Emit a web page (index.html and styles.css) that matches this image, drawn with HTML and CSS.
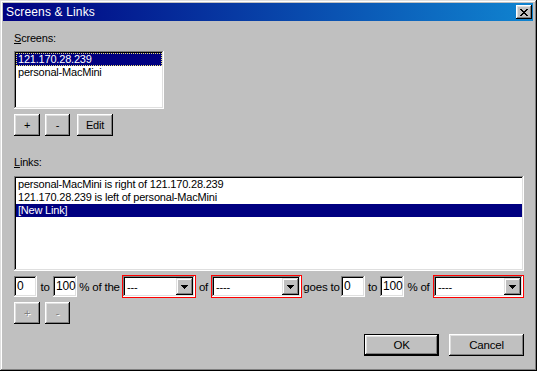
FILE: index.html
```html
<!DOCTYPE html>
<html lang="en">
<head>
    <meta charset="UTF-8">
    <title>Screens &amp; Links</title>
    <link rel="stylesheet" href="styles.css">
</head>
<body>
<div class="window">
    <div class="titlebar">
        <span class="title">Screens &amp; Links</span>
        <span class="close">
            <svg width="8" height="7" viewBox="0 0 8 7" shape-rendering="crispEdges">
                <path d="M0 0h2v1h-2z M6 0h2v1h-2z M1 1h2v1h-2z M5 1h2v1h-2z M2 2h4v1h-4z M3 3h2v1h-2z M2 4h4v1h-4z M1 5h2v1h-2z M5 5h2v1h-2z M0 6h2v1h-2z M6 6h2v1h-2z" fill="#000"/>
            </svg>
        </span>
    </div>
    <div class="content">
        <div class="label"><u>S</u>creens:</div>
        <div class="listbox screens">
            <div class="item selected focus">121.170.28.239</div>
            <div class="item">personal-MacMini</div>
        </div>
        <div class="btnrow">
            <span class="btn small">+</span>
            <span class="btn small minus">-</span>
            <span class="btn edit">Edit</span>
        </div>

        <div class="label links-label"><u>L</u>inks:</div>
        <div class="listbox links">
            <div class="item">personal-MacMini is right of 121.170.28.239</div>
            <div class="item">121.170.28.239 is left of personal-MacMini</div>
            <div class="item selected">[New Link]</div>
        </div>

        <div class="fieldrow">
            <span class="field w23">0</span>
            <span class="txt t16">to</span>
            <span class="field w24">100</span>
            <span class="txt t45">% of the</span>
            <span class="combo c74">
                <span class="combo-val">---</span>
                <span class="arrow"><svg width="7" height="4" viewBox="0 0 7 4" shape-rendering="crispEdges"><path d="M0 0h7v1h-7z M1 1h5v1h-5z M2 2h3v1h-3z M3 3h1v1h-1z" fill="#000"/></svg></span>
            </span>
            <span class="txt t15">of</span>
            <span class="combo c91">
                <span class="combo-val">----</span>
                <span class="arrow"><svg width="7" height="4" viewBox="0 0 7 4" shape-rendering="crispEdges"><path d="M0 0h7v1h-7z M1 1h5v1h-5z M2 2h3v1h-3z M3 3h1v1h-1z" fill="#000"/></svg></span>
            </span>
            <span class="txt t39">goes to</span>
            <span class="field w24">0</span>
            <span class="txt t15">to</span>
            <span class="field w24">100</span>
            <span class="txt t29">% of</span>
            <span class="combo c91">
                <span class="combo-val">----</span>
                <span class="arrow"><svg width="7" height="4" viewBox="0 0 7 4" shape-rendering="crispEdges"><path d="M0 0h7v1h-7z M1 1h5v1h-5z M2 2h3v1h-3z M3 3h1v1h-1z" fill="#000"/></svg></span>
            </span>
        </div>

        <div class="btnrow disabled-row">
            <span class="btn small disabled">+</span>
            <span class="btn small minus disabled">-</span>
        </div>

        <div class="footer">
            <span class="btn wide default">OK</span>
            <span class="btn wide">Cancel</span>
        </div>
    </div>
</div>
</body>
</html>
```

FILE: styles.css
```css
*{
    margin: 0;
    padding: 0;
    box-sizing: border-box;
}
html, body{
    width: 537px;
    height: 371px;
    overflow: hidden;
    background-color: #c0c0c0;
}
body{
    font-family: "Liberation Sans", Arial, sans-serif;
    font-size: 11px;
    letter-spacing: -0.2px;
    color: #000;
}
.window{
    width: 537px;
    height: 371px;
    padding: 3px;
    background-color: #c0c0c0;
    display: flex;
    flex-direction: column;
    box-shadow: inset -1px -1px #000, inset 1px 1px #dfdfdf,
                inset -2px -2px #808080, inset 2px 2px #fff;
}
.titlebar{
    height: 18px;
    margin-right: 1px;
    padding: 0 1px 0 3px;
    display: flex;
    align-items: center;
    justify-content: space-between;
    background: linear-gradient(to right, #000080, #1084d0);
}
.title{
    color: #fff;
    font-size: 12px;
    letter-spacing: 0.15px;
}
.close{
    width: 16px;
    height: 14px;
    display: flex;
    align-items: center;
    justify-content: center;
    background-color: #c0c0c0;
    box-shadow: inset -1px -1px #000, inset 1px 1px #fff,
                inset -2px -2px #808080, inset 2px 2px #dfdfdf;
}
.close svg{
    display: block;
    margin-left: -1px;
}
.content{
    padding: 0 10px 0 11px;
    display: flex;
    flex-direction: column;
}
.label{
    margin-top: 11px;
    line-height: 13px;
    height: 13px;
}
.links-label{
    margin-top: 20px;
}
.listbox{
    background-color: #fff;
    padding: 2px;
    box-shadow: inset -1px -1px #fff, inset 1px 1px #808080,
                inset -2px -2px #dfdfdf, inset 2px 2px #000;
}
.screens{
    width: 150px;
    height: 58px;
    margin-top: 6px;
}
.links{
    width: 510px;
    height: 95px;
    margin-top: 7px;
}
.item{
    height: 13px;
    line-height: 13px;
    padding-left: 2px;
    white-space: nowrap;
}
.item.selected{
    background-color: #000080;
    color: #fff;
}
.item.focus{
    outline: 1px dotted #e8e070;
    outline-offset: -1px;
}
.btnrow{
    margin-top: 5px;
    height: 22px;
    display: flex;
}
.btn{
    height: 22px;
    display: flex;
    align-items: center;
    justify-content: center;
    background-color: #c0c0c0;
    box-shadow: inset -1px -1px #000, inset 1px 1px #fff,
                inset -2px -2px #808080, inset 2px 2px #dfdfdf;
}
.btn.small{
    width: 26px;
}
.btn.minus{
    width: 25px;
    margin-left: 5px;
}
.btn.edit{
    width: 36px;
    margin-left: 7px;
}
.btn.disabled{
    color: #808080;
    text-shadow: 1px 1px #fff;
}
.fieldrow{
    margin-top: 5px;
    height: 21px;
    display: flex;
    align-items: center;
}
.field{
    height: 21px;
    line-height: 17px;
    padding: 2px 3px;
    background-color: #fff;
    font-size: 12px;
    box-shadow: inset -1px -1px #fff, inset 1px 1px #808080,
                inset -2px -2px #dfdfdf, inset 2px 2px #000;
}
.w23{ width: 23px; }
.w24{ width: 24px; }
.txt{
    text-align: center;
    white-space: nowrap;
    font-size: 11.5px;
}
.t15{ width: 15px; }
.t16{ width: 16px; }
.t29{ width: 29px; }
.t39{ width: 39px; }
.t45{ width: 45px; }
.combo{
    height: 23px;
    padding: 3px;
    display: flex;
    align-items: center;
    background-color: #fff;
    box-shadow: inset 0 0 0 1px #f00,
                inset -2px -2px #fff, inset 2px 2px #808080,
                inset -3px -3px #dfdfdf, inset 3px 3px #000;
}
.c74{ width: 74px; }
.c91{ width: 91px; }
.combo-val{
    flex: 1;
    padding-left: 2px;
}
.arrow{
    width: 17px;
    height: 17px;
    display: flex;
    align-items: center;
    justify-content: center;
    background-color: #c0c0c0;
    box-shadow: inset -1px -1px #000, inset 1px 1px #dfdfdf,
                inset -2px -2px #808080, inset 2px 2px #fff;
}
.arrow svg{
    display: block;
}
.disabled-row{
    margin-top: 5px;
}
.footer{
    margin-top: 10px;
    display: flex;
    justify-content: flex-end;
    gap: 10px;
}
.btn.wide{
    width: 75px;
    font-size: 11.5px;
}
.btn.default{
    box-shadow: inset 0 0 0 1px #000, inset -2px -2px #000, inset 2px 2px #fff,
                inset -3px -3px #808080, inset 3px 3px #dfdfdf;
}
```
